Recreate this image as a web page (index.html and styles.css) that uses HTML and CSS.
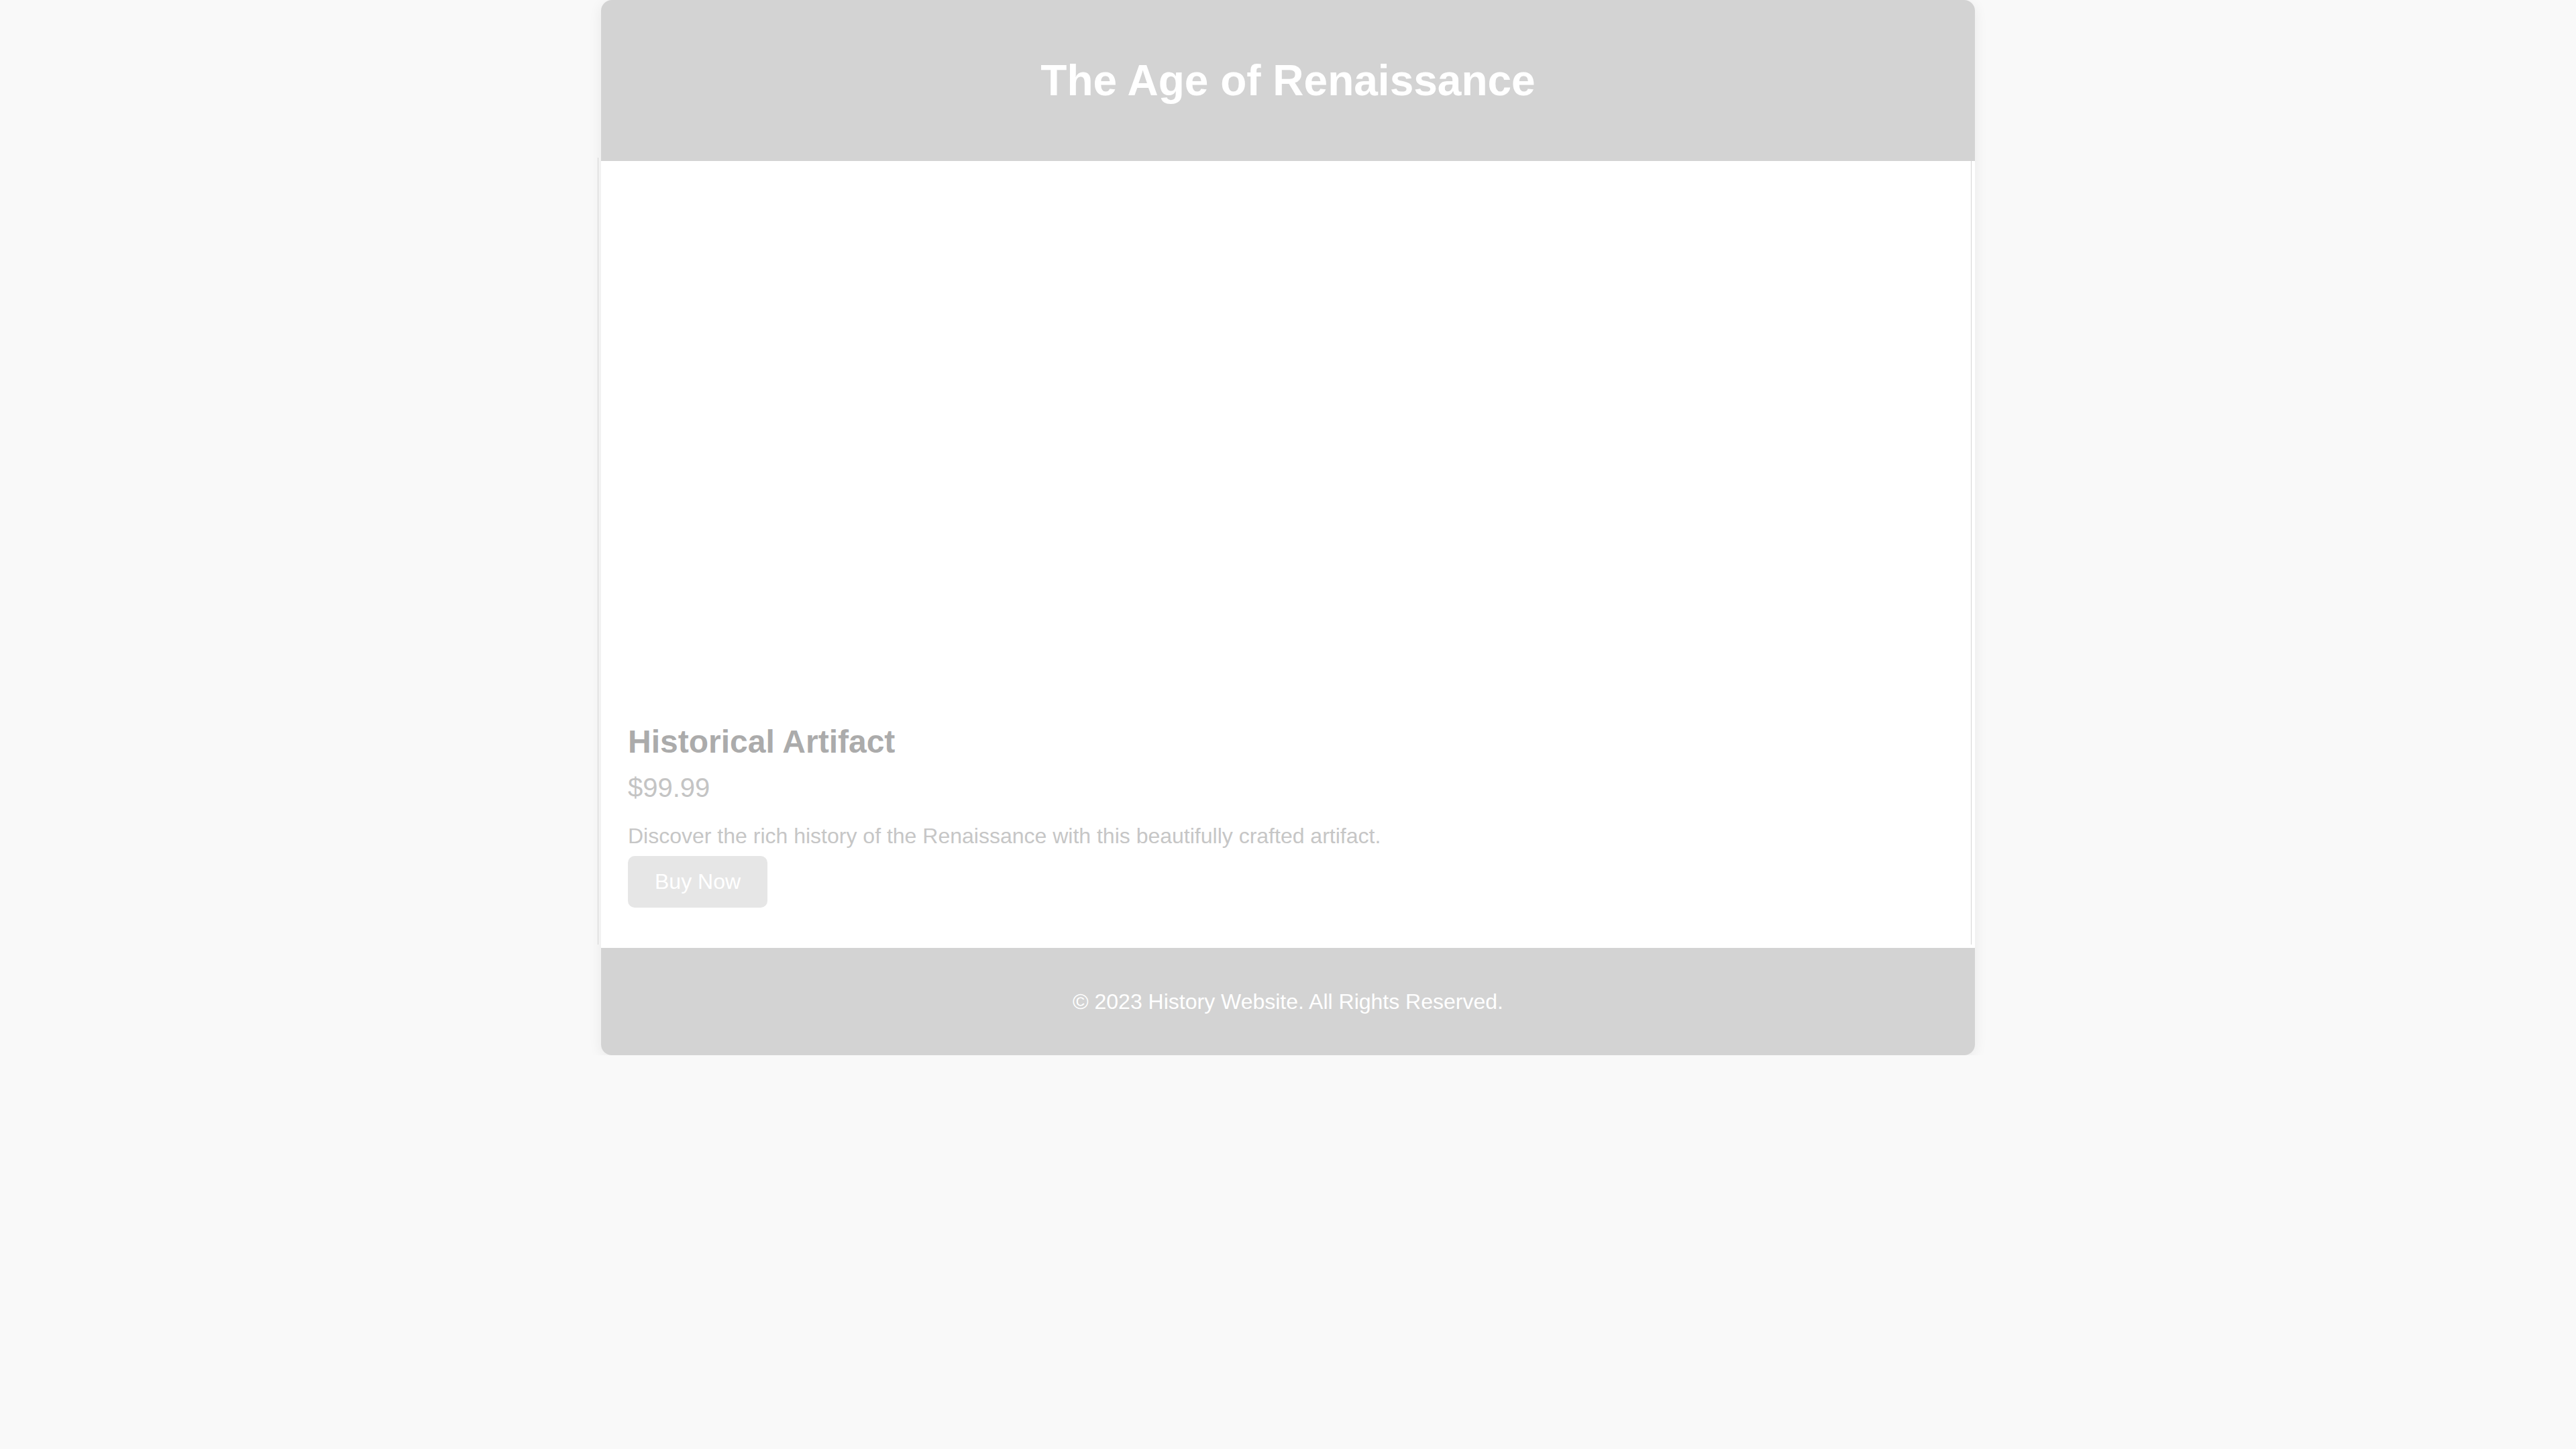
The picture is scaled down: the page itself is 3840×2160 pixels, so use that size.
FILE: index.html
```html
<!DOCTYPE html>
<html lang="en">
<head>
<meta charset="utf-8">
<title>The Age of Renaissance</title>
<link rel="stylesheet" href="styles.css">
</head>
<body>
<div class="page">
  <header class="site-header">
    <h1 class="site-title">The Age of Renaissance</h1>
  </header>
  <main class="product">
    <div class="product-card">
      <div class="product-image"></div>
      <h2 class="product-title">Historical Artifact</h2>
      <p class="product-price">$99.99</p>
      <p class="product-desc">Discover the rich history of the Renaissance with this beautifully crafted artifact.</p>
      <a class="buy-btn" href="#">Buy Now</a>
    </div>
  </main>
  <footer class="site-footer">
    <p class="footer-text">&copy; 2023 History Website. All Rights Reserved.</p>
  </footer>
</div>
</body>
</html>
```

FILE: styles.css
```css
html, body {
  margin: 0;
  padding: 0;
}

body {
  background: #f9f9f9;
  font-family: "Liberation Sans", Arial, sans-serif;
  color: #333;
}

.page {
  width: 2048px;
  margin: 0 auto;
  border-radius: 16px;
  box-shadow: 0 4px 20px rgba(0, 0, 0, 0.07);
}

.site-header {
  position: relative;
  z-index: 2;
  background: #d3d3d3;
  border-radius: 16px 16px 0 0;
  padding: 83px 0;
  text-align: center;
}

.site-title {
  margin: 0;
  font-size: 64px;
  line-height: 74px;
  font-weight: bold;
  color: #ffffff;
}

.product {
  background: #ffffff;
}

.product-card {
  position: relative;
  padding: 0 40px 60px;
}

.product-card::before {
  content: "";
  position: absolute;
  left: -5px;
  top: -5px;
  right: 5px;
  bottom: 5px;
  border-left: 1px solid #d4d4d4;
  border-right: 1px solid #d4d4d4;
  pointer-events: none;
}

.product-image {
  height: 800px;
  background: #ffffff;
}

.product-title {
  margin: 38px 0 0;
  font-size: 48px;
  line-height: normal;
  font-weight: bold;
  color: #ababab;
}

.product-price {
  margin: 19px 0 0;
  font-size: 40px;
  line-height: normal;
  color: #c4c4c4;
}

.product-desc {
  margin: 31px 0 0;
  font-size: 32px;
  line-height: normal;
  color: #c6c6c6;
}

.buy-btn {
  display: block;
  width: max-content;
  margin-top: 11px;
  padding: 20px 40px;
  font-size: 32px;
  line-height: normal;
  color: #ffffff;
  background: #e6e6e6;
  border-radius: 10px;
  text-decoration: none;
}

.site-footer {
  background: #d3d3d3;
  border-radius: 0 0 16px 16px;
  text-align: center;
}

.footer-text {
  margin: 0;
  padding: 61.6px 0;
  font-size: 32px;
  line-height: normal;
  color: #ffffff;
}
```
